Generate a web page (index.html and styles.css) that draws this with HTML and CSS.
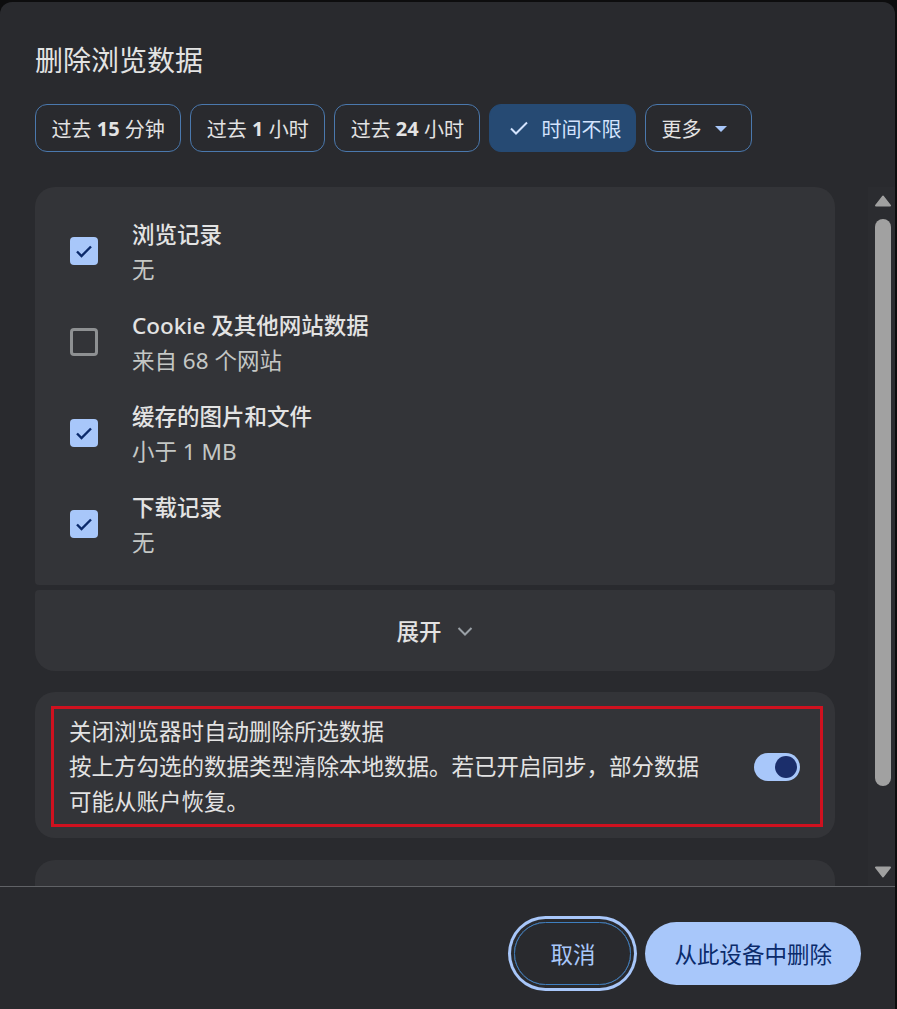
FILE: index.html
```html
<!DOCTYPE html>
<html lang="zh-CN">
<head>
<meta charset="utf-8">
<title>删除浏览数据</title>
<link rel="stylesheet" href="styles.css">
</head>
<body>
<div class="dialog">
  <h1 class="title">删除浏览数据</h1>
  <div class="chips">
    <button class="chip">过去 <b>15</b> 分钟</button>
    <button class="chip">过去 <b>1</b> 小时</button>
    <button class="chip">过去 <b>24</b> 小时</button>
    <button class="chip selected"><svg class="chip-check" width="24" height="24" viewBox="0 0 24 24"><path d="M4 12.5l5 5L20 6.5" fill="none" stroke="#d3e3fd" stroke-width="2"/></svg>时间不限</button>
    <button class="chip more">更多<svg class="caret" width="20" height="20" viewBox="0 0 20 20"><polygon points="4,8 16,8 10,14" fill="#a8c7fa"/></svg></button>
  </div>

  <div class="scroll">
    <div class="scroll-content">
      <div class="card card-top">
        <div class="row">
          <span class="checkbox checked"><svg width="28" height="28" viewBox="0 0 28 28"><path d="M7 14.5l4.5 4.5L21 9.5" fill="none" stroke="#0b2a6b" stroke-width="2.4"/></svg></span>
          <div class="row-text"><div class="row-title">浏览记录</div><div class="row-sub">无</div></div>
        </div>
        <div class="row">
          <span class="checkbox"></span>
          <div class="row-text"><div class="row-title">Cookie 及其他网站数据</div><div class="row-sub">来自 68 个网站</div></div>
        </div>
        <div class="row">
          <span class="checkbox checked"><svg width="28" height="28" viewBox="0 0 28 28"><path d="M7 14.5l4.5 4.5L21 9.5" fill="none" stroke="#0b2a6b" stroke-width="2.4"/></svg></span>
          <div class="row-text"><div class="row-title">缓存的图片和文件</div><div class="row-sub">小于 1 MB</div></div>
        </div>
        <div class="row">
          <span class="checkbox checked"><svg width="28" height="28" viewBox="0 0 28 28"><path d="M7 14.5l4.5 4.5L21 9.5" fill="none" stroke="#0b2a6b" stroke-width="2.4"/></svg></span>
          <div class="row-text"><div class="row-title">下载记录</div><div class="row-sub">无</div></div>
        </div>
      </div>
      <div class="card card-expand">
        <span>展开</span>
        <svg width="18" height="12" viewBox="0 0 18 12"><path d="M2.5 3l6.5 6.5L15.5 3" fill="none" stroke="#9aa0a6" stroke-width="2"/></svg>
      </div>
      <div class="card toggle-card">
        <div class="toggle-text">
          <div>关闭浏览器时自动删除所选数据</div>
          <div>按上方勾选的数据类型清除本地数据。若已开启同步，部分数据可能从账户恢复。</div>
        </div>
        <span class="toggle"><span class="knob"></span></span>
        <div class="highlight"></div>
      </div>
      <div class="card card-next"></div>
    </div>
    <div class="scrollbar">
      <svg class="sb-arrow sb-up" width="16" height="12" viewBox="0 0 16 12"><polygon points="8,1.5 15,10.5 1,10.5" fill="#a0a0a0" stroke="#a0a0a0" stroke-width="2" stroke-linejoin="round"/></svg>
      <div class="sb-thumb"></div>
      <svg class="sb-arrow sb-down" width="16" height="12" viewBox="0 0 16 12"><polygon points="1,1.5 15,1.5 8,10.5" fill="#a0a0a0" stroke="#a0a0a0" stroke-width="2" stroke-linejoin="round"/></svg>
    </div>
  </div>

  <div class="footer">
    <button class="btn btn-cancel">取消</button>
    <button class="btn btn-delete">从此设备中删除</button>
  </div>
</div>
</body>
</html>
```

FILE: styles.css
```css
html, body {
  margin: 0;
  padding: 0;
  background: #0d0d0e;
}

body {
  font-family: "Noto Sans", "Noto Sans CJK SC", sans-serif;
  color: #e3e3e3;
}

.dialog {
  margin: 2px 2px 0 0;
  height: 1007px;
  background: #292a2e;
  border-radius: 12px 12px 0 0;
  display: flex;
  flex-direction: column;
  overflow: hidden;
}

.title {
  margin: 0;
  padding: 40px 0 0 35px;
  font-size: 28px;
  line-height: 36px;
  font-weight: 400;
  color: #e3e3e3;
}

.chips {
  display: flex;
  gap: 9px;
  padding: 26px 35px 0;
}

.chip {
  height: 48px;
  box-sizing: border-box;
  border: 1px solid #4a78ad;
  border-radius: 12px;
  background: transparent;
  color: #e3e3e3;
  font-family: inherit;
  font-size: 20px;
  padding: 0 15.5px;
  display: inline-flex;
  align-items: center;
  white-space: pre;
}

.chip b {
  font-weight: 700;
}

.chip.selected {
  background: #264a73;
  border-color: #264a73;
  color: #d3e3fd;
  padding: 0 14px 0 17px;
}

.chip-check {
  margin-right: 10px;
}

.chip.more {
  padding: 0 20px 0 15px;
}

.caret {
  margin-left: 10px;
}

.scroll {
  margin-top: 35px;
  height: 699px;
  display: flex;
}

.scroll-content {
  flex: 1;
  padding: 0 33px 0 35px;
  overflow: hidden;
}

.card {
  background: #333438;
}

.card-top {
  border-radius: 20px 20px 4px 4px;
  padding: 30px 35px 25px;
  display: flex;
  flex-direction: column;
  gap: 21px;
}

.row {
  display: flex;
  align-items: center;
  gap: 34px;
  height: 70px;
}

.checkbox {
  width: 28px;
  height: 28px;
  box-sizing: border-box;
  border-radius: 4px;
  border: 3px solid #8e9092;
  flex: none;
  margin-top: -3px;
}

.checkbox.checked {
  border: none;
  background: #a8c7fa;
}

.checkbox svg {
  display: block;
}

.row-title {
  font-size: 22.5px;
  line-height: 35px;
  font-weight: 500;
  color: #e3e3e3;
}

.row-sub {
  font-size: 22.5px;
  line-height: 35px;
  color: #c4c7c5;
}

.card-expand {
  margin-top: 5px;
  height: 81px;
  border-radius: 4px 4px 20px 20px;
  display: flex;
  align-items: center;
  justify-content: center;
  gap: 14px;
  font-size: 22.5px;
  font-weight: 500;
  color: #e3e3e3;
}

.toggle-card {
  position: relative;
  margin-top: 21px;
  border-radius: 20px;
  padding: 22px 35px 19px 34px;
  display: flex;
  align-items: center;
  gap: 40px;
}

.toggle-text {
  flex: 1;
  font-size: 22.5px;
  line-height: 35px;
  color: #e3e3e3;
}

.toggle {
  width: 46px;
  height: 28px;
  box-sizing: border-box;
  border-radius: 14px;
  background: #a8c7fa;
  display: flex;
  align-items: center;
  justify-content: flex-end;
  padding: 0 3px;
  flex: none;
}

.knob {
  width: 22px;
  height: 22px;
  border-radius: 50%;
  background: #1b2e6b;
}

.highlight {
  position: absolute;
  left: 16px;
  top: 14px;
  right: 12px;
  bottom: 11px;
  border: 3px solid #cf111f;
  pointer-events: none;
}

.card-next {
  margin-top: 22px;
  height: 80px;
  border-radius: 20px 20px 0 0;
}

.scrollbar {
  width: 27px;
  background: #2b2c30;
  display: flex;
  flex-direction: column;
  align-items: flex-start;
  padding-left: 7px;
  box-sizing: border-box;
}

.sb-arrow {
  display: block;
  flex: none;
}

.sb-up {
  margin-top: 8px;
}

.sb-thumb {
  margin-top: 12px;
  width: 16px;
  height: 567px;
  border-radius: 8px;
  background: #a1a1a1;
}

.sb-down {
  margin-top: auto;
  margin-bottom: 8px;
}

.footer {
  flex: 1;
  border-top: 1px solid #606266;
  display: flex;
  justify-content: flex-end;
  align-items: flex-start;
  gap: 14px;
  padding: 35px 34px 0 0;
}

.btn {
  height: 63px;
  border-radius: 32px;
  font-family: inherit;
  font-size: 22.5px;
  font-weight: 400;
  box-sizing: border-box;
}

.btn-cancel {
  background: transparent;
  border: 1px solid #3e7fc0;
  color: #a8c7fa;
  padding: 0 35px;
  box-shadow: 0 0 0 3px #292a2e, 0 0 0 6px #a8c7fa;
}

.btn-delete {
  background: #a8c7fa;
  border: none;
  color: #0b2b6b;
  padding: 0 29px;
}
```
